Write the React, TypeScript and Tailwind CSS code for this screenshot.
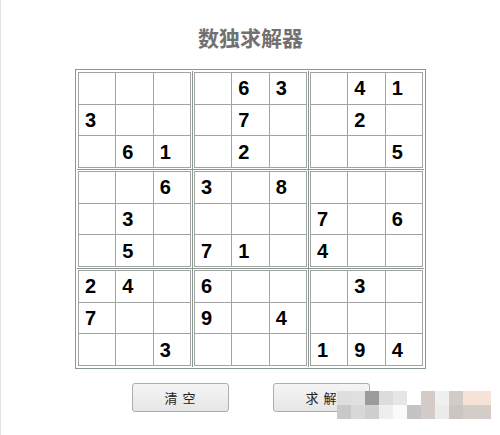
const PUZZLE: string[] = [
  '000063041',
  '300070020',
  '061020005',
  '006308000',
  '030000706',
  '050710400',
  '240600030',
  '700904000',
  '003000194',
];

// mosaic watermark colours, two rows of 14px blocks
const MOSAIC_TOP = ['#dedede', '#e0e0e0', '#9b9b9b', '#dcdcdc', '#e6e6e6', '#ffffff', '#d5cbc6', '#f0f0f0', '#d3cbc8', '#f6e2d6', '#f6e2d6'];
const MOSAIC_BOTTOM = ['#c9c9c9', '#d8d8d8', '#cfcfcf', '#eeeeee', '#fafafa', '#c4c4c4', '#d2cbc7', '#ebebeb', '#ccc5c1', '#d4ccc8', '#d4ccc8'];

function Block({ br, bc }: { br: number; bc: number }) {
  const cells: string[] = [];
  for (let r = 0; r < 3; r++) {
    for (let c = 0; c < 3; c++) {
      cells.push(PUZZLE[br * 3 + r][bc * 3 + c]);
    }
  }
  return (
    <div className="bg-white p-[1px]">
      <div className="grid grid-cols-3 grid-rows-3 gap-[1px] bg-[#a3a3a3] p-[1px] w-[113px] h-[96px]">
        {cells.map((v, i) => (
          <div
            key={i}
            className="bg-white flex items-center pl-[6px] text-[20px] font-bold text-black leading-none"
          >
            {v !== '0' ? v : ''}
          </div>
        ))}
      </div>
    </div>
  );
}

export default function App() {
  return (
    <div className="relative w-[500px] h-[435px] bg-white border-l border-[#e2e2e2] overflow-hidden font-['Liberation_Sans','Noto_Sans_CJK_SC',sans-serif]">
      <div className="flex flex-col items-center pt-[26px]">
        <h1 className="h-[22px] leading-[22px] text-[21px] font-bold text-[#717171] font-['Noto_Sans_CJK_SC',sans-serif]">
          数独求解器
        </h1>

        <div className="mt-[21px] border border-[#889991] bg-white p-[1px]">
          <div className="grid grid-cols-3 gap-[1px] bg-[#889991]">
            {[0, 1, 2].map(br =>
              [0, 1, 2].map(bc => <Block key={`${br}-${bc}`} br={br} bc={bc} />)
            )}
          </div>
        </div>

        <div className="mt-[14px] flex gap-[44px]">
          {['清空', '求解'].map(label => (
            <button
              key={label}
              className="w-[97px] h-[29px] rounded-[3px] border border-[#adadad] bg-gradient-to-b from-[#f5f5f5] to-[#e6e6e6] text-[13px] text-[#222] tracking-[5px] pl-[5px] font-['Noto_Sans_CJK_SC',sans-serif]"
            >
              {label}
            </button>
          ))}
        </div>
      </div>

      {/* pixelated watermark over the corner */}
      <div className="absolute left-[336px] top-[391px] flex flex-col">
        {[MOSAIC_TOP, MOSAIC_BOTTOM].map((row, ri) => (
          <div key={ri} className="flex">
            {row.map((c, i) => (
              <div key={i} className="w-[14px] h-[14px]" style={{ backgroundColor: c }} />
            ))}
          </div>
        ))}
      </div>
    </div>
  );
}
